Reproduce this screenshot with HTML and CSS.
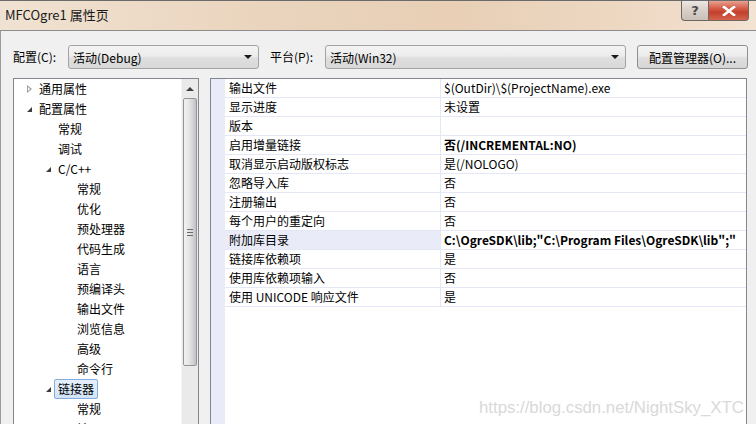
FILE: index.html
```html
<!DOCTYPE html>
<html lang="zh-CN">
<head>
    <meta charset="UTF-8">
    <title>MFCOgre1 属性页</title>
    <link rel="stylesheet" href="styles.css">
</head>
<body>
    <div class="window">
        <div class="titlebar">
            <span class="title">MFCOgre1 属性页</span>
            <div class="caption-buttons">
                <div class="cap-btn help">?</div>
                <div class="cap-btn close">
                    <svg width="14" height="10" viewBox="0 0 14 10"><path d="M2 1 L12 9 M12 1 L2 9" stroke="#fff" stroke-width="2.6" stroke-linecap="square"/></svg>
                </div>
            </div>
        </div>

        <div class="body">
            <div class="toolbar">
                <label class="lbl">配置(C):</label>
                <div class="combo combo-config"><span>活动(Debug)</span><i class="arrow"></i></div>
                <label class="lbl lbl-platform">平台(P):</label>
                <div class="combo combo-platform"><span>活动(Win32)</span><i class="arrow"></i></div>
                <button class="btn">配置管理器(O)...</button>
            </div>

            <div class="main">
                <div class="tree-panel">
                    <ul class="tree">
                        <li class="lv1"><span class="tw collapsed"></span>通用属性</li>
                        <li class="lv1"><span class="tw expanded"></span>配置属性</li>
                        <li class="lv2">常规</li>
                        <li class="lv2">调试</li>
                        <li class="lv2 node"><span class="tw expanded"></span>C/C++</li>
                        <li class="lv3">常规</li>
                        <li class="lv3">优化</li>
                        <li class="lv3">预处理器</li>
                        <li class="lv3">代码生成</li>
                        <li class="lv3">语言</li>
                        <li class="lv3">预编译头</li>
                        <li class="lv3">输出文件</li>
                        <li class="lv3">浏览信息</li>
                        <li class="lv3">高级</li>
                        <li class="lv3">命令行</li>
                        <li class="lv2 node"><span class="tw expanded"></span><span class="selected">链接器</span></li>
                        <li class="lv3">常规</li>
                        <li class="lv3">输入</li>
                    </ul>
                    <div class="scrollbar">
                        <div class="sb-up"><i></i></div>
                        <div class="sb-thumb"><i class="grip"></i></div>
                        <div class="sb-track"></div>
                    </div>
                </div>

                <div class="grid">
                    <div class="gutter"></div>
                    <div class="rows">
                        <div class="row"><div class="name">输出文件</div><div class="value">$(OutDir)\$(ProjectName).exe</div></div>
                        <div class="row"><div class="name">显示进度</div><div class="value">未设置</div></div>
                        <div class="row"><div class="name">版本</div><div class="value"></div></div>
                        <div class="row"><div class="name">启用增量链接</div><div class="value bold">否(/INCREMENTAL:NO)</div></div>
                        <div class="row"><div class="name">取消显示启动版权标志</div><div class="value">是(/NOLOGO)</div></div>
                        <div class="row"><div class="name">忽略导入库</div><div class="value">否</div></div>
                        <div class="row"><div class="name">注册输出</div><div class="value">否</div></div>
                        <div class="row"><div class="name">每个用户的重定向</div><div class="value">否</div></div>
                        <div class="row active"><div class="name">附加库目录</div><div class="value bold">C:\OgreSDK\lib;"C:\Program Files\OgreSDK\lib";"</div></div>
                        <div class="row"><div class="name">链接库依赖项</div><div class="value">是</div></div>
                        <div class="row"><div class="name">使用库依赖项输入</div><div class="value">否</div></div>
                        <div class="row"><div class="name">使用 UNICODE 响应文件</div><div class="value">是</div></div>
                    </div>
                    <div class="watermark">https://blog.csdn.net/NightSky_XTC</div>
                </div>
            </div>
        </div>
    </div>
</body>
</html>
```

FILE: styles.css
```css
body {
    margin: 0;
    padding: 0;
    background-color: #f0f0f0;
    font-family: "Noto Sans CJK SC", "Noto Sans", sans-serif;
    font-size: 12px;
    color: #000;
}

.window {
    width: 756px;
    height: 424px;
    overflow: hidden;
    display: flex;
    flex-direction: column;
}

.titlebar {
    height: 29px;
    flex: none;
    display: flex;
    align-items: flex-start;
    border-top: 1px solid #6b6b6b;
    border-bottom: 1px solid #8c8c8c;
    background: linear-gradient(90deg, #f0e2d2 0%, #ead4bd 35%, #e8cfb6 60%, #eed9c4 85%, #f3e3d3 100%);
}

.title {
    padding: 6px 0 0 5px;
    font-size: 13px;
    line-height: 16px;
    color: #1a1a1a;
}

.caption-buttons {
    margin-left: auto;
    margin-right: 7px;
    display: flex;
}

.cap-btn {
    height: 19px;
    display: flex;
    align-items: center;
    justify-content: center;
    border: 1px solid #6e6660;
    border-top: none;
}

.help {
    width: 26px;
    border-radius: 0 0 0 4px;
    background: linear-gradient(#ece7e2, #d8d0c8 50%, #c9c0b8);
    color: #4a4a4a;
    font-family: "DejaVu Sans", sans-serif;
    font-weight: bold;
    font-size: 13px;
}

.close {
    width: 39px;
    border-left: none;
    border-radius: 0 0 4px 0;
    background: linear-gradient(#e7a190, #d0533f 45%, #c2402c 60%, #d5644d);
}

.body {
    flex: 1;
    display: flex;
    flex-direction: column;
    border-left: 1px solid #9a9a9a;
    min-height: 0;
}

.toolbar {
    display: flex;
    align-items: center;
    height: 24px;
    margin-top: 14px;
    padding-left: 12px;
}

.lbl {
    width: 55px;
    line-height: 24px;
}

.lbl-platform {
    margin-left: 11px;
}

.combo {
    height: 22px;
    border: 1px solid #a3a3a3;
    border-radius: 3px;
    background: linear-gradient(#f4f4f4, #ececec 45%, #dedede 55%, #d9d9d9);
    display: flex;
    align-items: center;
    padding-left: 4px;
    box-sizing: content-box;
}

.combo-config {
    width: 185px;
}

.combo-platform {
    width: 295px;
}

.combo span {
    flex: 1;
}

.arrow {
    width: 0;
    height: 0;
    border-left: 4px solid transparent;
    border-right: 4px solid transparent;
    border-top: 4px solid #1a1a1a;
    margin-right: 6px;
}

.btn {
    margin-left: 11px;
    width: 111px;
    height: 24px;
    padding: 0;
    border: 1px solid #8f8f8f;
    border-radius: 3px;
    background: linear-gradient(#f4f4f4, #ececec 45%, #dedede 55%, #d6d6d6);
    font-family: inherit;
    font-size: 12px;
    color: #000;
}

.main {
    flex: 1;
    display: flex;
    margin-top: 9px;
    padding-left: 12px;
    min-height: 0;
}

.tree-panel {
    width: 184px;
    flex: none;
    border: 1px solid #828790;
    border-bottom: none;
    background-color: #fff;
    display: flex;
    overflow: hidden;
}

.tree {
    list-style: none;
    margin: 0;
    padding: 0;
    flex: 1;
    min-width: 0;
}

.tree li {
    height: 20px;
    line-height: 20px;
    display: flex;
    align-items: center;
    white-space: nowrap;
}

.tree li.lv1 { padding-left: 12px; }
.tree li.lv2 { padding-left: 44px; }
.tree li.lv2.node { padding-left: 31px; }
.tree li.lv3 { padding-left: 63px; }

.tw {
    width: 13px;
    height: 20px;
    flex: none;
    position: relative;
}

.tw.collapsed::before {
    content: "";
    position: absolute;
    left: 1px;
    top: 6px;
    width: 0;
    height: 0;
    border-top: 4px solid transparent;
    border-bottom: 4px solid transparent;
    border-left: 5px solid #a0a0a0;
}

.tw.collapsed::after {
    content: "";
    position: absolute;
    left: 2px;
    top: 8px;
    width: 0;
    height: 0;
    border-top: 2px solid transparent;
    border-bottom: 2px solid transparent;
    border-left: 2.5px solid #fff;
}

.tw.expanded::before {
    content: "";
    position: absolute;
    left: 1px;
    top: 8px;
    width: 0;
    height: 0;
    border-left: 5px solid transparent;
    border-bottom: 5px solid #3c3c3c;
}

.selected {
    margin-left: -4px;
    padding: 0 3px;
    height: 18px;
    line-height: 18px;
    border: 1px solid #84acdd;
    border-radius: 2px;
    background: linear-gradient(#e6f0fb, #d1e3f8);
}

.scrollbar {
    width: 16px;
    flex: none;
    display: flex;
    flex-direction: column;
    background-color: #eaeaea;
    border-left: 1px solid #f4f4f4;
}

.sb-up {
    height: 19px;
    display: flex;
    align-items: center;
    justify-content: center;
}

.sb-up i {
    width: 0;
    height: 0;
    border-left: 4px solid transparent;
    border-right: 4px solid transparent;
    border-bottom: 4px solid #404040;
}

.sb-thumb {
    height: 266px;
    margin: 0 1px;
    border: 1px solid #959595;
    border-radius: 2px;
    background: linear-gradient(90deg, #f2f2f2, #e4e4e4 45%, #cfcfd2 80%, #c0c0c4);
    display: flex;
    align-items: center;
    justify-content: center;
}

.grip {
    width: 6px;
    height: 5px;
    border-top: 1px solid #6a6a6a;
    border-bottom: 1px solid #6a6a6a;
    background: linear-gradient(transparent 2px, #6a6a6a 2px, #6a6a6a 3px, transparent 3px);
}

.sb-track {
    flex: 1;
}

.grid {
    width: 535px;
    flex: none;
    margin-left: 11px;
    border: 1px solid #828790;
    border-bottom: none;
    background-color: #fff;
    display: flex;
    position: relative;
}

.gutter {
    width: 14px;
    flex: none;
    background-color: #e9ecf8;
}

.rows {
    flex: 1;
    min-width: 0;
}

.row {
    display: flex;
    height: 18px;
    border-bottom: 1px solid #e4e8f6;
    line-height: 18px;
}

.name {
    width: 211px;
    flex: none;
    padding-left: 4px;
    border-right: 1px solid #e4e8f6;
    white-space: nowrap;
}

.value {
    flex: 1;
    padding-left: 3px;
    white-space: nowrap;
    overflow: hidden;
}

.bold {
    font-weight: bold;
}

.row.active .name {
    background-color: #e9ecf8;
}

.watermark {
    position: absolute;
    left: 268px;
    top: 319px;
    font-family: "Liberation Sans", Arial, sans-serif;
    font-size: 16.8px;
    color: #d9d9d9;
    white-space: nowrap;
}
```
